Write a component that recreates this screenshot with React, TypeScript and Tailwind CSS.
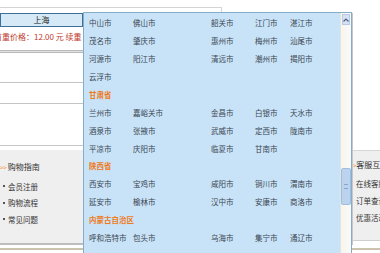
const font = { fontFamily: '"Noto Sans CJK SC", "Noto Sans", sans-serif' };

type Row = { head?: string; cities?: string[] };

const rows: Row[] = [
  { cities: ["中山市", "佛山市", "韶关市", "江门市", "湛江市"] },
  { cities: ["茂名市", "肇庆市", "惠州市", "梅州市", "汕尾市"] },
  { cities: ["河源市", "阳江市", "清远市", "潮州市", "揭阳市"] },
  { cities: ["云浮市"] },
  { head: "甘肃省" },
  { cities: ["兰州市", "嘉峪关市", "金昌市", "白银市", "天水市"] },
  { cities: ["酒泉市", "张掖市", "武威市", "定西市", "陇南市"] },
  { cities: ["平凉市", "庆阳市", "临夏市", "甘南市"] },
  { head: "陕西省" },
  { cities: ["西安市", "宝鸡市", "咸阳市", "铜川市", "渭南市"] },
  { cities: ["延安市", "榆林市", "汉中市", "安康市", "商洛市"] },
  { head: "内蒙古自治区" },
  { cities: ["呼和浩特市", "包头市", "乌海市", "集宁市", "通辽市"] },
];

const colW = ["w-[44px]", "w-[78px]", "w-[44px]", "w-[35px]", "w-[40px]"];

const CityDropdown = () => (
  <div className="absolute left-[83px] top-[12px] w-[269px] h-[250px] bg-[#c8e3f7] border border-[#86adc6] flex">
    <div className="flex-1 pl-[5px] pt-[1px]">
      {rows.map((r, i) =>
        r.head ? (
          <div key={i} className="h-[17.9px] flex items-center text-[7.5px] font-bold text-[#f07a1a]">
            {r.head}
          </div>
        ) : (
          <div key={i} className="h-[17.9px] flex items-center text-[7.5px] text-[#3b4652]">
            {r.cities!.map((c, j) => (
              <span key={j} className={`${colW[j]} whitespace-nowrap`}>
                {c}
              </span>
            ))}
          </div>
        )
      )}
    </div>
    <div className="relative w-[11px] bg-gradient-to-r from-[#f7f5ef] to-[#fbfaf7] border-l border-[#e6e3da]">
      <div className="h-[11px] m-[1px] bg-[#d6e1f3] border border-[#b9c9e3] flex items-center justify-center">
        <svg width="6" height="4" viewBox="0 0 6 4">
          <path d="M0.5 3.5 L3 1 L5.5 3.5" stroke="#4d6185" strokeWidth="1.2" fill="none" />
        </svg>
      </div>
      <div className="absolute left-0 top-[155px] w-[10px] h-[37px] bg-[#bcd3f0] border border-[#a2bde2] rounded-[2px] flex items-center justify-center">
        <div className="w-[4px] h-[5px] border-t border-b border-[#8aa6d0]" />
      </div>
    </div>
  </div>
);

export default function App() {
  return (
    <div className="relative w-[380px] h-[253px] overflow-hidden bg-white" style={font}>
      <div className="h-[13px] pt-[7px]">
        <div className="w-[222px] h-[6px] border-t border-r border-[#d4d4d4]" />
      </div>
      <div className="flex">
        <div className="w-[83px] flex flex-col">
          <div className="h-[14px] border border-[#3e7097] bg-[#d6e9f7] flex items-center justify-center text-[8px] text-[#222]">
            上海
          </div>
          <div className="h-[19px] flex items-center whitespace-nowrap overflow-hidden">
            <span className="-ml-[6px] text-[8px] text-[#c0392b]">首重价格：12.00 元 续重</span>
          </div>
          <div className="mt-[4px] h-[3px] border-t border-b border-[#b8b8b8] bg-[#e2e2e2]" />
          <div className="h-[29px]" />
          <div className="h-[1px] bg-[#c4c4c4]" />
          <div className="h-[20px]" />
          <div className="h-[1px] bg-[#c4c4c4]" />
          <div className="h-[41px]" />
          <div className="h-[1px] bg-[#c8c8c8]" />
          <div className="h-[4px]" />
          <div className="h-[93px] bg-[#efefef] pt-[10px]">
            <div className="flex items-center h-[14px] text-[8px] text-[#333]">
              <span className="text-[6px] text-[#f08a1c] mr-[1px]">&gt;&gt;</span>购物指南
            </div>
            <div className="flex flex-col pl-[3px] mt-[4px] text-[7.5px] text-[#333]">
              {["会员注册", "购物流程", "常见问题"].map(t => (
                <div key={t} className="h-[16.5px] flex items-center">
                  <span className="w-[2px] h-[2px] bg-[#555] mr-[3px]" />
                  {t}
                </div>
              ))}
            </div>
          </div>
          <div className="h-[2px] bg-[#bdbdbd]" />
        </div>
        <div className="flex-1" />
        <div className="w-[28px] flex flex-col border-l border-[#c8c8c8]">
          <div className="h-[137px]" />
          <div className="h-[90px] bg-[#efefef] border-t border-[#d6d6d6] pt-[7px] overflow-hidden whitespace-nowrap">
            <div className="flex items-center h-[14px] text-[8px] text-[#333]">
              <span className="text-[6px] text-[#f08a1c]">&gt;</span>客服互动
            </div>
            <div className="flex flex-col pl-[3px] mt-[3px] text-[7.5px] text-[#333]">
              {["在线客服", "订单查询", "优惠活动"].map(t => (
                <div key={t} className="h-[17px] flex items-center">
                  {t}
                </div>
              ))}
            </div>
          </div>
          <div className="h-[1px] bg-[#cfcfcf]" />
        </div>
      </div>
      <div className="absolute left-0 bottom-[3px] w-full h-[2px] bg-[#cbc3ac]" />
      <CityDropdown />
    </div>
  );
}
